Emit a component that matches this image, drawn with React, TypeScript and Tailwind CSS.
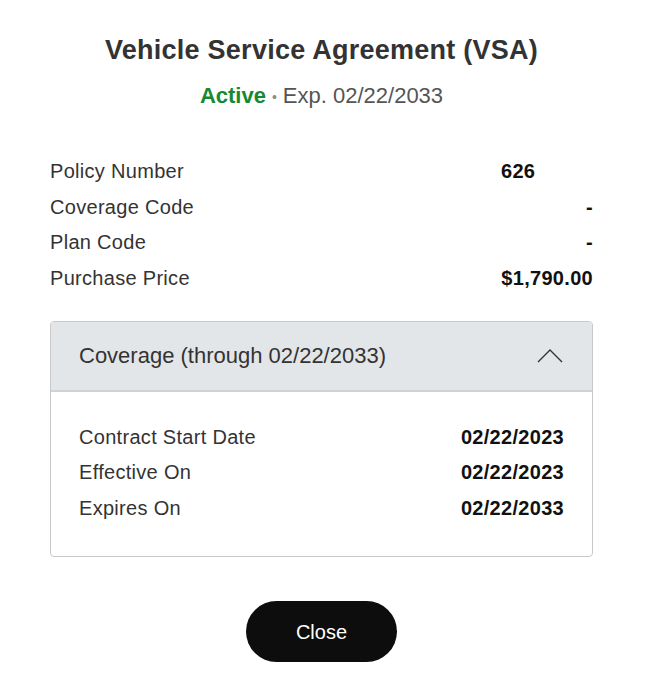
import type React from 'react';

const summary = [
  { label: 'Policy Number', value: '626', left: true },
  { label: 'Coverage Code', value: '-' },
  { label: 'Plan Code', value: '-' },
  { label: 'Purchase Price', value: '$1,790.00' },
];

const coverage = [
  { label: 'Contract Start Date', value: '02/22/2023' },
  { label: 'Effective On', value: '02/22/2023' },
  { label: 'Expires On', value: '02/22/2033' },
];

const App: React.FC = () => {
  return (
    <div className="min-h-[686px] w-[651px] bg-white pl-[50px] pr-[58px] pt-[34px] font-[family-name:Liberation_Sans,Arial,sans-serif]">
      {/* Header */}
      <h1 className="text-center text-[27px] font-bold leading-8 tracking-[0.25px] text-[#333333]">
        Vehicle Service Agreement (VSA)
      </h1>
      <p className="mt-4 text-center text-[22px] leading-7 text-[#555555]">
        <span className="font-bold text-[#168a2f]">Active</span>
        <span className="mx-[6px] text-[14px] align-middle text-[#8a8a8a]">•</span>
        Exp. 02/22/2033
      </p>

      {/* Summary rows */}
      <dl className="mt-[42px]">
        {summary.map((row) => (
          <div key={row.label} className="flex h-[35.7px] items-center justify-between text-[20px] tracking-[0.3px]">
            <dt className="text-[#333333]">{row.label}</dt>
            <dd className={`w-[92px] font-bold text-[#111111] ${row.left ? 'text-left' : 'text-right'}`}>
              {row.value}
            </dd>
          </div>
        ))}
      </dl>

      {/* Coverage accordion */}
      <div className="mt-[25px] overflow-hidden rounded-[4px] border border-[#c9c9c9]">
        <div className="flex h-[70px] items-center justify-between border-b-2 border-[#cfd2d5] bg-[#e3e6e9] pl-7 pr-[29px]">
          <span className="text-[22px] text-[#333333]">Coverage (through 02/22/2033)</span>
          <svg width="26" height="15" viewBox="0 0 26 15" fill="none" className="text-[#333333]">
            <path d="M1 14L13 2l12 12" stroke="currentColor" strokeWidth="1.4" />
          </svg>
        </div>
        <dl className="px-7 pb-[31px] pt-[27px]">
          {coverage.map((row) => (
            <div key={row.label} className="flex h-[35.5px] items-center justify-between text-[20px] tracking-[0.3px]">
              <dt className="text-[#333333]">{row.label}</dt>
              <dd className="font-bold text-[#111111]">{row.value}</dd>
            </div>
          ))}
        </dl>
      </div>

      {/* Footer */}
      <div className="mt-[44px] flex justify-center">
        <button className="h-[61px] w-[151px] rounded-full bg-[#0d0d0d] text-[20px] text-white">
          Close
        </button>
      </div>
    </div>
  );
};

export default App;
